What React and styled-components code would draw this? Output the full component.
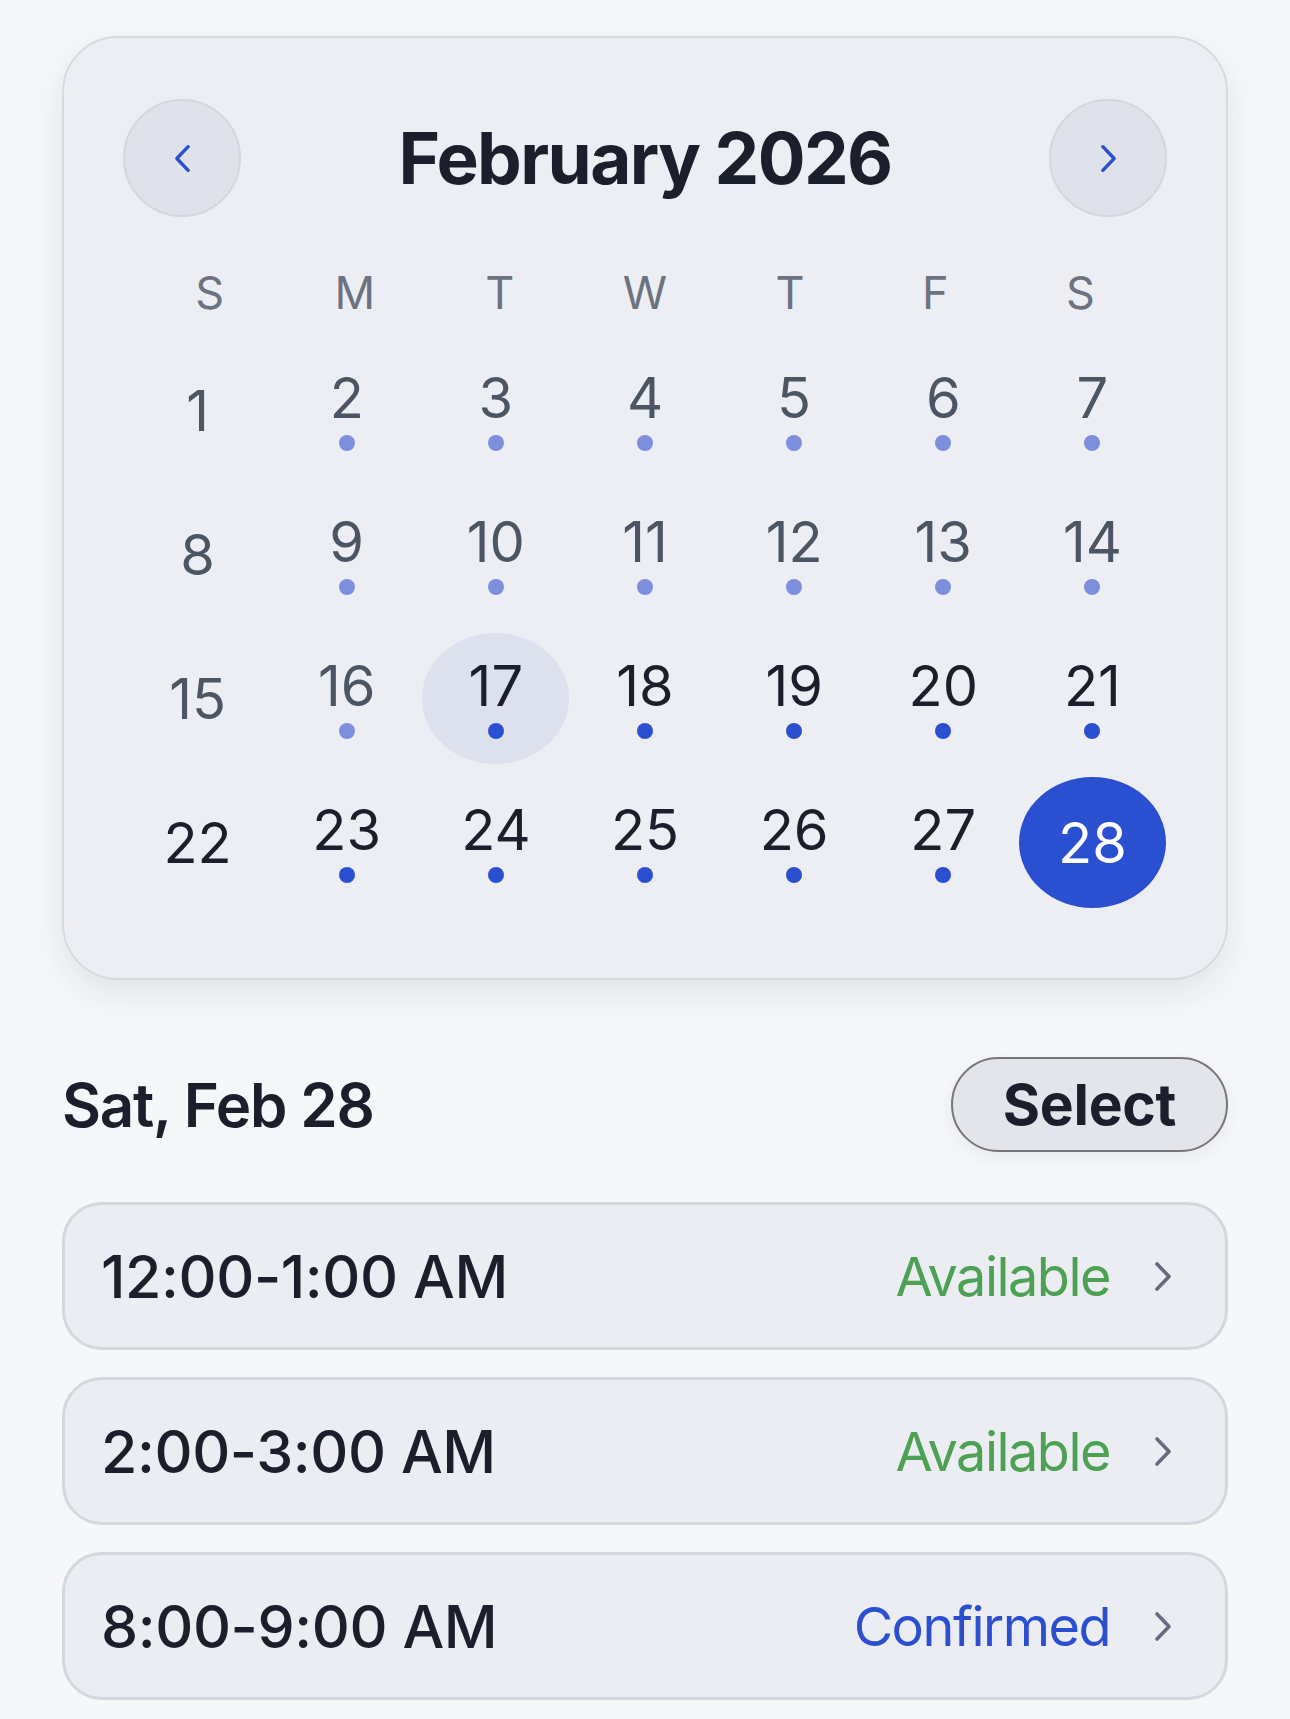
import React from "react";
import styled, { createGlobalStyle } from "styled-components";

const GlobalStyle = createGlobalStyle`
    html, body {
        margin: 0;
        padding: 0;
        background-color: #f6f7f9;
    }
    body {
        font-family: Inter, "Noto Sans", "Liberation Sans", sans-serif;
        color: #1b1e2b;
        -webkit-font-smoothing: antialiased;
    }
`;

const Page = styled.div`
    width: 1290px;
    min-height: 1719px;
    box-sizing: border-box;
    padding: 36px 62px 0px;
`;

const Card = styled.div`
    width: 1166px;
    box-sizing: border-box;
    padding: 61px 59px 70px;
    background-color: #edeef3;
    border: 2px solid #d6d9e0;
    border-radius: 56px;
    box-shadow: 0px 14px 34px rgba(30, 35, 60, 0.09);
`;

const Header = styled.div`
    display: flex;
    align-items: center;
    justify-content: space-between;
`;

const NavButton = styled.button`
    width: 118px;
    height: 118px;
    border-radius: 50%;
    border: 2px solid #d2d6de;
    background-color: #dfe2ea;
    display: flex;
    align-items: center;
    justify-content: center;
    padding: 0;
    cursor: pointer;
`;

const Title = styled.h1`
    flex: 1;
    margin: 0;
    text-align: center;
    font-size: 71px;
    font-weight: 700;
    letter-spacing: -1.6px;
    line-height: 1;
    color: #1b1e2b;
`;

const Weekdays = styled.div`
    display: grid;
    grid-template-columns: repeat(7, 1fr);
    padding: 0px 14px;
    margin-top: 48px;
`;

const Weekday = styled.span`
    text-align: center;
    font-size: 45px;
    line-height: 56px;
    color: #6b7280;
`;

const Days = styled.div`
    display: grid;
    grid-template-columns: repeat(7, 1fr);
    row-gap: 13px;
    margin-top: 24px;
`;

const Day = styled.div`
    height: 131px;
    margin: 0px 1px;
    border-radius: 50%;
    display: flex;
    flex-direction: column;
    align-items: center;
    justify-content: center;
    gap: 9px;
    background-color: ${(p) =>
        p.$selected ? "#2b4fd1" : p.$today ? "#dde1ee" : "transparent"};
    color: ${(p) => (p.$selected ? "#ffffff" : p.$past ? "#4b5563" : "#1b1e2b")};
`;

const DayNum = styled.span`
    font-size: 56px;
    line-height: 56px;
`;

const Dot = styled.span`
    width: 16px;
    height: 16px;
    border-radius: 50%;
    background-color: ${(p) => (p.$past ? "#7b8fde" : "#2b4fd1")};
`;

const DateBar = styled.div`
    display: flex;
    align-items: center;
    justify-content: space-between;
    margin-top: 77px;
`;

const DateTitle = styled.h2`
    margin: 0;
    font-size: 60px;
    font-weight: 600;
    letter-spacing: -1.2px;
    color: #1b1e2b;
`;

const SelectButton = styled.button`
    width: 277px;
    height: 95px;
    box-sizing: border-box;
    border-radius: 48px;
    border: 2px solid #75767b;
    background-color: #e4e5ea;
    font-family: inherit;
    font-size: 57px;
    font-weight: 700;
    letter-spacing: -0.3px;
    color: #1b1e2b;
    box-shadow: 0px 6px 20px rgba(0, 0, 0, 0.06);
    cursor: pointer;
`;

const SlotList = styled.div`
    display: flex;
    flex-direction: column;
    gap: 27px;
    margin-top: 50px;
`;

const Slot = styled.div`
    height: 148px;
    box-sizing: border-box;
    display: flex;
    align-items: center;
    padding: 0px 53px 0px 36px;
    background-color: #ecedf2;
    border: 3px solid #d3d7de;
    border-radius: 40px;
`;

const SlotTime = styled.span`
    flex: 1;
    font-size: 59px;
    font-weight: 500;
    letter-spacing: -0.4px;
    color: #1b1e2b;
`;

const SlotStatus = styled.span`
    font-size: 54px;
    letter-spacing: -1.5px;
    margin-right: 44px;
    color: ${(p) => (p.$tone === "confirmed" ? "#2b4fd1" : "#4ca153")};
`;

const Chevron = ({ dir = "right", color, w, h }) => (
    <svg width={w} height={h} viewBox="0 0 18 31" fill="none">
        <path
            d={dir === "right" ? "M3 3 L15 15.5 L3 28" : "M15 3 L3 15.5 L15 28"}
            stroke={color}
            strokeWidth="3.6"
            strokeLinecap="round"
            strokeLinejoin="round"
        />
    </svg>
);

const weekdays = ["S", "M", "T", "W", "T", "F", "S"];
const today = 17;
const selected = 28;

const slots = [
    { time: "12:00-1:00 AM", status: "Available", tone: "available" },
    { time: "2:00-3:00 AM", status: "Available", tone: "available" },
    { time: "8:00-9:00 AM", status: "Confirmed", tone: "confirmed" },
];

const App = () => {
    const days = Array.from({ length: 28 }, (_, i) => i + 1);

    return (
        <Page>
            <GlobalStyle />
            <Card>
                <Header>
                    <NavButton aria-label="Previous month">
                        <Chevron dir="left" color="#2b4fd1" w={17} h={31} />
                    </NavButton>
                    <Title>February 2026</Title>
                    <NavButton aria-label="Next month">
                        <Chevron dir="right" color="#2b4fd1" w={17} h={31} />
                    </NavButton>
                </Header>
                <Weekdays>
                    {weekdays.map((d, i) => (
                        <Weekday key={i}>{d}</Weekday>
                    ))}
                </Weekdays>
                <Days>
                    {days.map((d) => {
                        const sunday = (d - 1) % 7 === 0;
                        const isSel = d === selected;
                        const past = d < today;
                        return (
                            <Day
                                key={d}
                                $selected={isSel}
                                $today={d === today}
                                $past={past}
                            >
                                <DayNum>{d}</DayNum>
                                {!sunday && !isSel && <Dot $past={past} />}
                            </Day>
                        );
                    })}
                </Days>
            </Card>

            <DateBar>
                <DateTitle>Sat, Feb 28</DateTitle>
                <SelectButton>Select</SelectButton>
            </DateBar>

            <SlotList>
                {slots.map((s) => (
                    <Slot key={s.time}>
                        <SlotTime>{s.time}</SlotTime>
                        <SlotStatus $tone={s.tone}>{s.status}</SlotStatus>
                        <Chevron color="#646b7d" w={18} h={31} />
                    </Slot>
                ))}
            </SlotList>
        </Page>
    );
};

export default App;
